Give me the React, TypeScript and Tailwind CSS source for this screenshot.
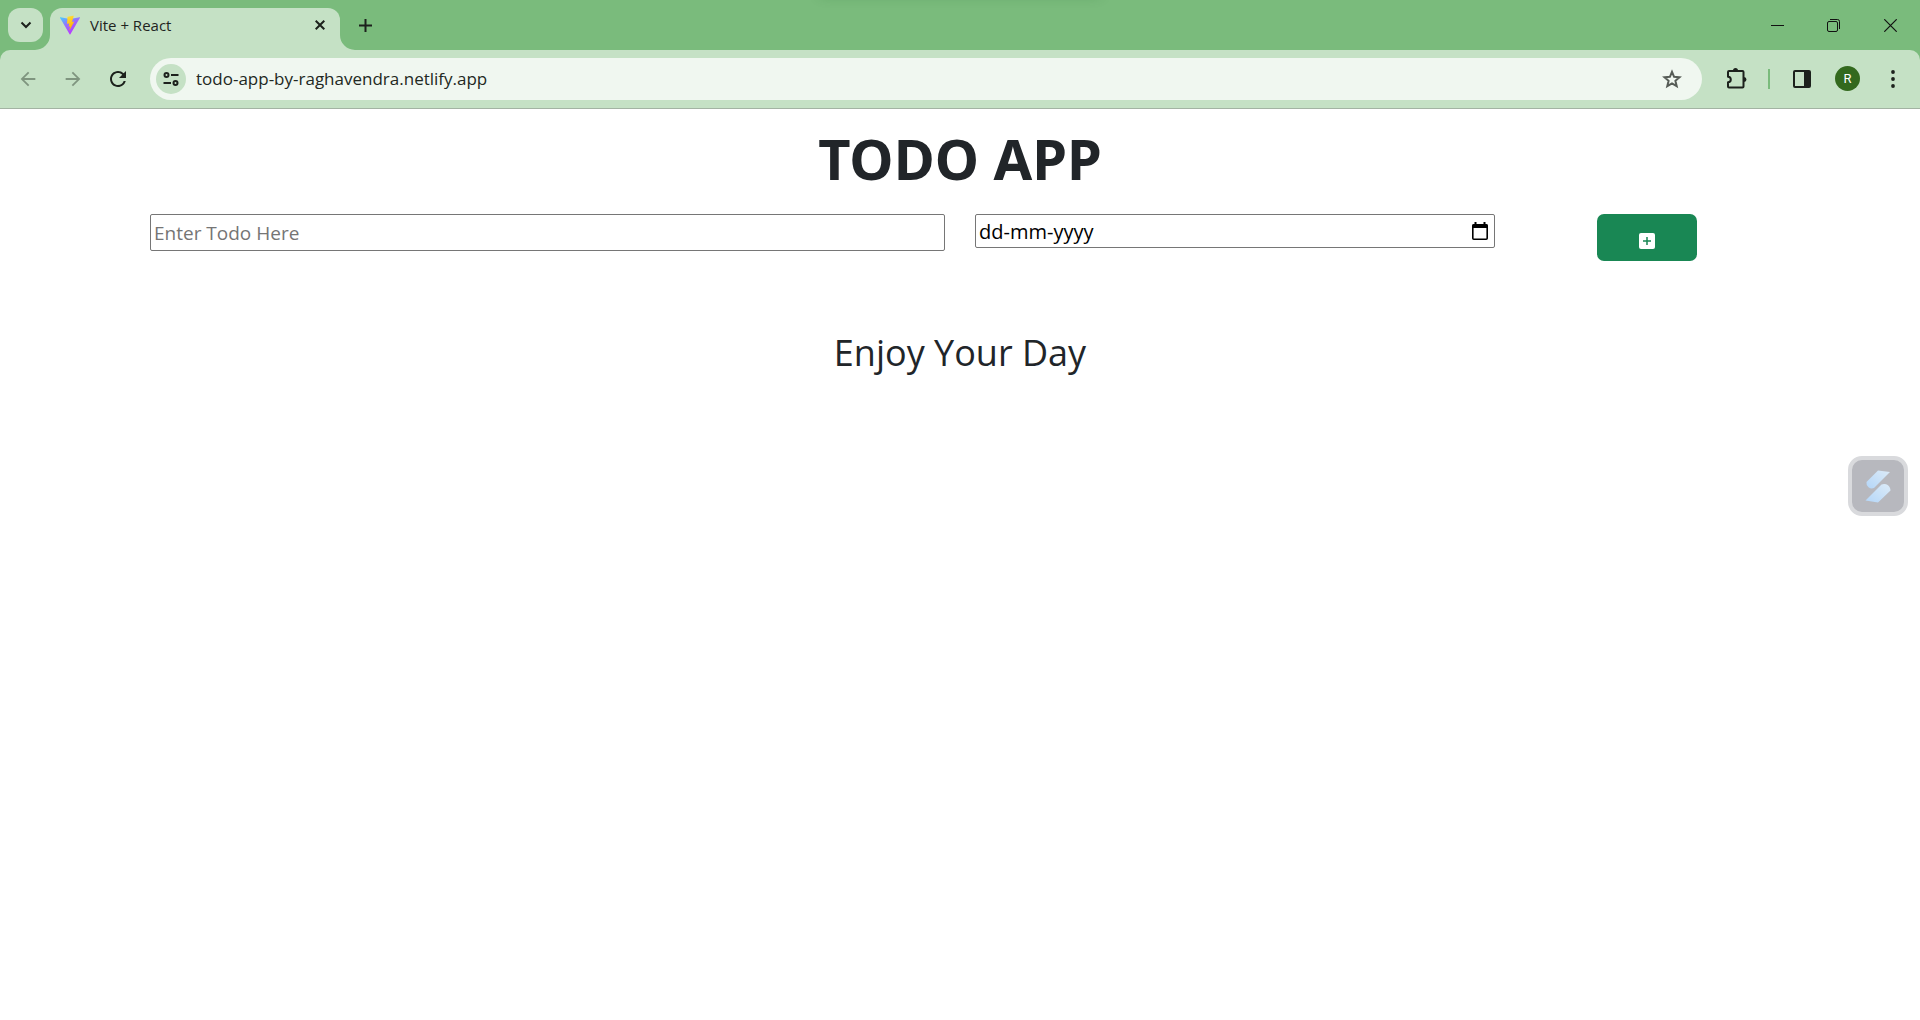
import React, { useState } from "react";
import { MdArrowBack, MdArrowForward, MdRefresh } from "react-icons/md";

function ViteLogo() {
  return (
    <svg viewBox="0 0 20 20" className="size-5 shrink-0" aria-hidden="true">
      <defs>
        <linearGradient id="vite-body" x1="0" y1="0" x2="0.6" y2="1">
          <stop offset="0" stopColor="#41d1ff" />
          <stop offset="0.5" stopColor="#9a6bff" />
          <stop offset="1" stopColor="#bd34fe" />
        </linearGradient>
        <linearGradient id="vite-bolt" x1="0.4" y1="0" x2="0.6" y2="1">
          <stop offset="0" stopColor="#ffdd35" />
          <stop offset="1" stopColor="#ffa800" />
        </linearGradient>
      </defs>
      <path d="M.3 2.2 10 4l9.7-1.8a.4.4 0 0 1 .3.6L10.400 19.200a.4.4 0 0 1-.8 0L0 2.800a.4.4 0 0 1 .3-.6Z" fill="url(#vite-body)" />
      <path d="M14.300.5 7.700 1.700a.3.3 0 0 0-.2.3L7 8.800l2.200-.4-.6 3.300 1.500-.4-.8 4.400 5-9.200-2.300.4.900-3.100.9-3a.3.3 0 0 0 .4-.3Z" fill="url(#vite-bolt)" />
    </svg>
  );
}

function TabStrip() {
  return (
    <header className="relative flex h-[50px] items-start overflow-hidden bg-[#7abb7c] pt-2 pl-2">
      <div className="absolute -top-3 left-1/2 h-2 w-[280px] -translate-x-1/2 shadow-[0_0_12px_rgba(40,110,50,0.3)]" />
      <button aria-label="Search tabs" className="flex h-[34px] w-[35px] items-center justify-center rounded-xl bg-[#c5e1c5]">
        <svg viewBox="0 0 12 8" className="h-2 w-3" fill="none" stroke="#1c211c" strokeWidth="2">
          <path d="m1.500 1.500 4.500 4.500 4.500-4.500" />
        </svg>
      </button>
      <div className="relative ml-[7px] flex h-[42px] w-[290px] items-center rounded-t-xl bg-[#c5e1c5] px-2.5 pb-2">
        <svg viewBox="0 0 15 15" className="absolute bottom-0 -left-[15px] size-[15px]" fill="#c5e1c5">
          <path d="M15 0v15H0A15 15 0 0 0 15 0Z" />
        </svg>
        <svg viewBox="0 0 15 15" className="absolute -right-[15px] bottom-0 size-[15px]" fill="#c5e1c5">
          <path d="M0 0v15h15A15 15 0 0 1 0 0Z" />
        </svg>
        <ViteLogo />
        <span className="ml-2.5 text-[15px] text-[#1f241f]">Vite + React</span>
        <button aria-label="Close tab" className="ml-auto flex size-5 items-center justify-center">
          <svg viewBox="0 0 10 10" className="size-2.5" fill="none" stroke="#1c211c" strokeWidth="2">
            <path d="m.7.7 8.600 8.600M9.300.7.7 9.300" />
          </svg>
        </button>
      </div>
      <button aria-label="New tab" className="ml-[15px] flex h-[34px] w-5 items-center justify-center">
        <svg viewBox="0 0 13 13" className="size-[13px]" fill="none" stroke="#1c211c" strokeWidth="2">
          <path d="M6.500 0v13M0 6.500h13" />
        </svg>
      </button>
      <div className="ml-auto flex h-[34px] items-center">
        <button aria-label="Minimize" className="flex w-14 justify-center">
          <svg viewBox="0 0 13 13" className="size-[13px]" stroke="#111">
            <path d="M0 6.500h13" />
          </svg>
        </button>
        <button aria-label="Restore" className="flex w-14 justify-center">
          <svg viewBox="0 0 13 13" className="size-[13px]" fill="none" stroke="#111">
            <rect x=".5" y="2.500" width="10" height="10" rx="1.500" />
            <path d="M3 .5h7.500a2 2 0 0 1 2 2V10" />
          </svg>
        </button>
        <button aria-label="Close" className="flex w-[59px] justify-center">
          <svg viewBox="0 0 13 13" className="size-[13px]" fill="none" stroke="#111" strokeWidth="1.200">
            <path d="m.3.3 12.400 12.400M12.700.3.3 12.700" />
          </svg>
        </button>
      </div>
    </header>
  );
}

function AddressBar() {
  const [url, setUrl] = useState("todo-app-by-raghavendra.netlify.app");
  return (
    <div className="ml-[9px] flex h-[42px] flex-1 items-center rounded-full bg-[#f0f7f0] pr-5 pl-1.5">
      <button aria-label="View site information" className="flex size-[30px] shrink-0 items-center justify-center rounded-full bg-[#c5e1c5]">
        <svg viewBox="0 0 16 14" className="h-3.5 w-4" fill="none" stroke="#1c211c" strokeWidth="2">
          <circle cx="3.500" cy="3" r="2" />
          <path d="M8 3h7.500M.5 11H8" />
          <circle cx="12.500" cy="11" r="2" />
        </svg>
      </button>
      <input
        aria-label="Address and search bar"
        value={url}
        onChange={(e) => setUrl(e.target.value)}
        className="ml-2.5 h-8 min-w-0 flex-1 bg-transparent text-[17px] text-[#222822] outline-none"
      />
      <button aria-label="Bookmark this tab">
        <svg viewBox="0 0 20 20" className="size-5" fill="none" stroke="#565c56" strokeWidth="2">
          <path d="m10 2.800 2.100 5 5.400.5-4.100 3.500 1.300 5.300-4.700-2.800-4.700 2.800 1.300-5.300-4.100-3.500 5.400-.5Z" />
        </svg>
      </button>
    </div>
  );
}

function Toolbar() {
  return (
    <div className="bg-[#7abb7c]">
      <div className="flex h-[59px] items-center rounded-t-[10px] border-b border-[#a3b3a3] bg-[#c5e1c5] pr-[17px] pb-px pl-1.5">
        <button aria-label="Back" className="flex w-11 justify-center text-[#7f957f]">
          <MdArrowBack className="size-[22px]" />
        </button>
        <button aria-label="Forward" className="flex w-[45px] justify-center text-[#7f957f]">
          <MdArrowForward className="size-[22px]" />
        </button>
        <button aria-label="Reload" className="flex w-[46px] justify-center text-[#1c211c]">
          <MdRefresh className="size-6" />
        </button>
        <AddressBar />
        <button aria-label="Extensions" className="ml-6 flex">
          <svg viewBox="0 0 21 21" className="size-[21px]" fill="none" stroke="#1c211c" strokeWidth="2" strokeLinejoin="round">
            <path d="M3 3h13.500a1 1 0 0 1 1 1v14.500a1 1 0 0 1-1 1H3a1 1 0 0 1-1-1v-4.200a2.800 2.800 0 0 0 0-5.600V4a1 1 0 0 1 1-1Z" />
            <path d="M7 2.500a2.500 2.500 0 0 1 5 0ZM18 9a2.500 2.500 0 0 1 0 5Z" fill="#1c211c" stroke="none" />
          </svg>
        </button>
        <div className="ml-[21px] h-5 w-0.5 bg-[#7abb7c]" />
        <button aria-label="Side panel" className="ml-[23px]">
          <svg viewBox="0 0 18 18" className="size-[18px]">
            <rect x="1" y="1" width="16" height="16" rx="1" fill="none" stroke="#1c211c" strokeWidth="2" />
            <path d="M11 1h6v16h-6Z" fill="#1c211c" />
          </svg>
        </button>
        <button aria-label="Profile" className="ml-6 flex size-[25px] items-center justify-center rounded-full bg-[#33691e] font-['Roboto',sans-serif] text-[13px] text-white">
          R
        </button>
        <button aria-label="Menu" className="ml-[23px] flex w-5 justify-center">
          <svg viewBox="0 0 4 18" className="h-[18px] w-1" fill="#1c211c">
            <circle cx="2" cy="2" r="1.900" />
            <circle cx="2" cy="9" r="1.900" />
            <circle cx="2" cy="16" r="1.900" />
          </svg>
        </button>
      </div>
    </div>
  );
}

function TodoForm() {
  const [todo, setTodo] = useState("");
  const [due, setDue] = useState("");
  return (
    <form className="mt-[22px] grid grid-cols-12 items-start" onSubmit={(e) => e.preventDefault()}>
      <div className="col-span-6 px-[15px]">
        <input
          type="text"
          aria-label="Todo"
          placeholder="Enter Todo Here"
          value={todo}
          onChange={(e) => setTodo(e.target.value)}
          className="block h-[37px] w-full rounded-xs border border-[#767676] bg-white px-[3px] text-[19px] placeholder:text-[#757575]"
        />
      </div>
      <div className="col-span-4 px-[15px]">
        <div className="flex h-[34px] items-center rounded-xs border border-[#767676] bg-white pr-1.5 pl-[3px]">
          <input
            type="text"
            aria-label="Due date"
            placeholder="dd-mm-yyyy"
            value={due}
            onChange={(e) => setDue(e.target.value)}
            className="h-8 min-w-0 flex-1 bg-transparent text-[20px] text-black outline-none placeholder:text-black"
          />
          <button type="button" aria-label="Show date picker">
            <svg viewBox="0 0 16 18" className="h-[18px] w-4">
              <rect x=".8" y="2.800" width="14.400" height="14.400" rx="1" fill="none" stroke="#000" strokeWidth="1.600" />
              <path d="M.5 2.500h15V6H.5ZM2.500 0h2v3h-2ZM11.500 0h2v3h-2Z" />
            </svg>
          </button>
        </div>
      </div>
      <div className="col-span-2 flex justify-center pr-0.5">
        <button type="submit" aria-label="Add todo" className="flex h-[47px] w-[100px] items-center justify-center rounded-[7px] bg-[#198754] pt-[7px]">
          <svg viewBox="0 0 16 16" className="size-4">
            <rect width="16" height="16" rx="2" fill="#fff" />
            <path d="M8 4v8M4 8h8" stroke="#198754" strokeWidth="1.500" />
          </svg>
        </button>
      </div>
    </form>
  );
}

function FloatingWidget() {
  return (
    <button aria-label="Open assistant" className="fixed top-[456px] right-3 flex size-[60px] items-center justify-center rounded-[14px] border-4 border-[#d9dadd] bg-[#b7b8be]">
      <svg viewBox="0 0 26 34" className="h-[34px] w-[26px]">
        <defs>
          <linearGradient id="widget-mark" x1="0" y1="1" x2="1" y2="0">
            <stop offset="0" stopColor="#b4d6f8" />
            <stop offset="1" stopColor="#dcebf8" />
          </linearGradient>
        </defs>
        <path d="M13 1.500 25 3 9 19A5.500 5.500 0 0 1 1.500 13Z" fill="url(#widget-mark)" />
        <path d="M13 33.500.5 31.500 16.500 15.500A6.500 6.500 0 0 1 25.500 21.500Z" fill="url(#widget-mark)" />
      </svg>
    </button>
  );
}

export default function App() {
  return (
    <div className="min-h-screen bg-white font-['Open_Sans','Noto_Sans',sans-serif]">
      <TabStrip />
      <Toolbar />
      <main className="mx-auto max-w-[1650px] pt-[15px] text-[#212529]">
        <h1 className="text-center font-['Noto_Sans',sans-serif] text-[56px] leading-[68px] font-bold">TODO APP</h1>
        <TodoForm />
        <p className="mt-[68px] text-center text-[36px] leading-12">Enjoy Your Day</p>
      </main>
      <FloatingWidget />
    </div>
  );
}
